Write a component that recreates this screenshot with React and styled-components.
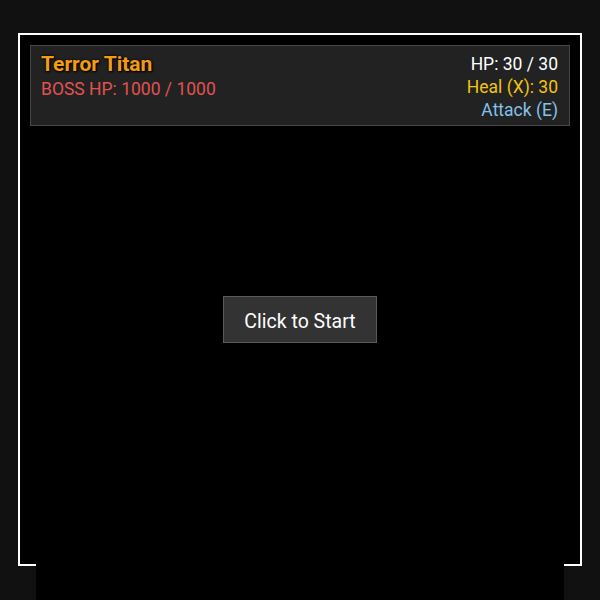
import React from 'react';
import styled, { createGlobalStyle } from 'styled-components';

const GlobalStyles = createGlobalStyle`
  html, body {
    margin: 0;
    padding: 0;
    background: #111111;
    font-family: Roboto, "Liberation Sans", Arial, sans-serif;
    overflow: hidden;
  }
`;

const Page = styled.div`
  width: 600px;
  height: 600px;
  padding: 33px 0 0 18px;
  box-sizing: border-box;
`;

const GameBox = styled.div`
  position: relative;
  width: 564px;
  height: 533px;
  box-sizing: border-box;
  border: 2px solid #ffffff;
  background: #000000;
  padding: 10px;
`;

const Hud = styled.div`
  display: flex;
  justify-content: space-between;
  height: 81px;
  box-sizing: border-box;
  background: #222222;
  border: 1px solid #474747;
  padding: 3px 11px 0 10px;
`;

const Column = styled.div`
  display: flex;
  flex-direction: column;
  align-items: ${({ $right }) => ($right ? 'flex-end' : 'flex-start')};
  padding-top: ${({ $right }) => ($right ? '3.5px' : '2px')};
`;

const BossName = styled.div`
  color: #f39c12;
  font-size: 21px;
  font-weight: 700;
  line-height: 27px;
  text-shadow: 0 0 3px #000, 1px 1px 2px #000;
`;

const Stat = styled.div`
  color: ${({ $color }) => $color};
  font-size: 17.5px;
  line-height: 23px;
`;

const Canvas = styled.div`
  width: 528px;
  height: 480px;
  margin: 10px auto 0;
  background: #000000;
`;

const StartButton = styled.button`
  position: absolute;
  left: 50%;
  top: 261px;
  transform: translateX(-50%);
  width: 154px;
  height: 47px;
  padding: 3px 0 0;
  background: #333333;
  border: 1px solid #5a5a5a;
  color: #ffffff;
  font-family: Roboto, "Liberation Sans", Arial, sans-serif;
  font-size: 19.5px;
  cursor: pointer;
`;

export default function App() {
  return (
    <Page>
      <GlobalStyles />
      <GameBox>
        <Hud>
          <Column>
            <BossName>Terror Titan</BossName>
            <Stat $color="#e05252">BOSS HP: 1000 / 1000</Stat>
          </Column>
          <Column $right>
            <Stat $color="#ffffff">HP: 30 / 30</Stat>
            <Stat $color="#f1c40f">Heal (X): 30</Stat>
            <Stat $color="#85c1e9">Attack (E)</Stat>
          </Column>
        </Hud>
        <Canvas />
        <StartButton>Click to Start</StartButton>
      </GameBox>
    </Page>
  );
}
